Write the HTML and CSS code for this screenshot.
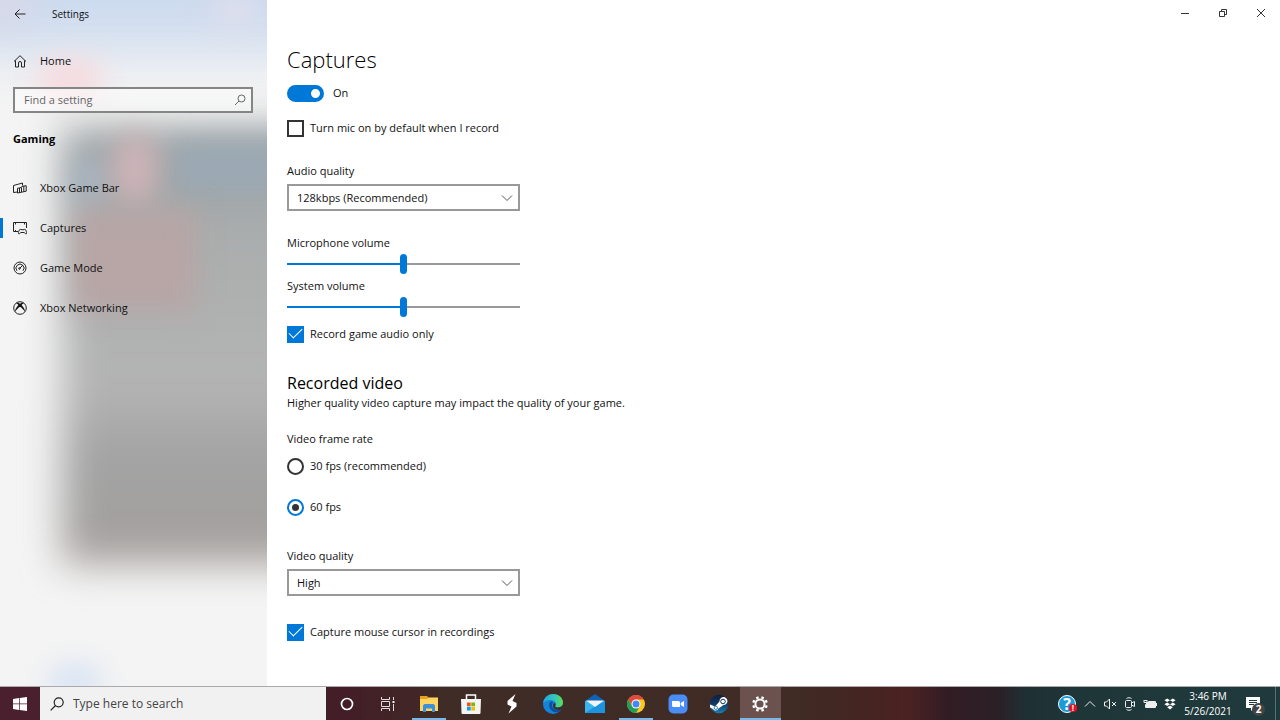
FILE: index.html
```html
<!DOCTYPE html>
<html lang="en">
<head>
    <meta charset="UTF-8">
    <meta name="viewport" content="width=device-width, initial-scale=1.0">
    <title>Settings</title>
    <link rel="stylesheet" href="styles.css">
</head>
<body>
    <div class="window">
        <aside class="sidebar">
            <!-- Acrylic backdrop -->
            <svg class="backdrop" viewBox="0 0 267 686" preserveAspectRatio="none" aria-hidden="true">
                <defs>
                    <filter id="blur" x="-150%" y="-150%" width="400%" height="400%" color-interpolation-filters="sRGB"><feGaussianBlur stdDeviation="14"/></filter>
                    <filter id="blurPanel" x="-50%" y="-50%" width="200%" height="200%" color-interpolation-filters="sRGB"><feGaussianBlur stdDeviation="19"/></filter>
                    <filter id="blurWide" x="-50%" y="-100%" width="200%" height="300%" color-interpolation-filters="sRGB"><feGaussianBlur stdDeviation="28"/></filter>
                    <linearGradient id="panel" x1="0" y1="0" x2="0" y2="1">
                        <stop offset="0" stop-color="#989fa1"/>
                        <stop offset="0.25" stop-color="#abaeae"/>
                        <stop offset="0.6" stop-color="#b4b4b4"/>
                        <stop offset="0.75" stop-color="#a3a3a3"/>
                        <stop offset="0.88" stop-color="#a3a2a1"/>
                        <stop offset="1" stop-color="#a59e9b"/>
                    </linearGradient>
                </defs>
                <rect width="267" height="686" fill="#f4f4f4"/>
                <rect x="-60" y="-70" width="400" height="120" fill="#ccdaee" filter="url(#blurWide)"/>
                <ellipse cx="5" cy="5" rx="30" ry="20" fill="#d8d8e8" filter="url(#blur)"/>
                <ellipse cx="235" cy="10" rx="22" ry="16" fill="#e2dfec" filter="url(#blur)"/>
                <ellipse cx="70" cy="80" rx="34" ry="20" fill="#f6d8dc" filter="url(#blur)"/>
                <rect x="62" y="128" width="400" height="436" fill="url(#panel)" filter="url(#blurPanel)"/>
                <rect x="172" y="142" width="200" height="50" fill="#9ba9b4" filter="url(#blur)"/>
                <ellipse cx="90" cy="182" rx="18" ry="26" fill="#a8b6c3" filter="url(#blur)"/>
                <ellipse cx="135" cy="170" rx="24" ry="38" fill="#ceb4b8" filter="url(#blur)"/>
                <rect x="74" y="210" width="122" height="100" fill="#b8a5a5" filter="url(#blur)"/>
                <ellipse cx="75" cy="682" rx="28" ry="18" fill="#d6e2f4" filter="url(#blur)"/>
            </svg>

            <header class="titlebar">
                <button class="back" aria-label="Back">
                    <svg width="12" height="12" viewBox="0 0 12 12"><path d="M11.500 6H1M5.500 1.500 1 6l4.500 4.500"/></svg>
                </button>
                <span class="app-name">Settings</span>
            </header>

            <a class="nav-item home" href="#">
                <svg width="14" height="14" viewBox="0 0 14 14"><path d="M1 7.500 7 1.700l6 5.800M2.500 6.500v6.500h3V9a1.500 1.500 0 0 1 3 0v4h3V6.500"/></svg>
                Home
            </a>

            <div class="find">
                <input type="text" placeholder="Find a setting" aria-label="Find a setting">
                <svg width="12" height="12" viewBox="0 0 12 12"><circle cx="7.500" cy="4.500" r="3.500"/><path d="M5 7 1 11"/></svg>
            </div>

            <h2 class="group">Gaming</h2>

            <nav>
                <a class="nav-item" href="#">
                    <svg width="14" height="14" viewBox="0 0 14 14"><path d="M4.500 11 .500 11.500V4.500L9.500 2v2.500M4.500 7.300V12l4-.800V6.500zM8.500 5.500l4.700-.8v5.500l-4.700 1M6.500 7v4.500M10.800 5v5.500"/></svg>
                    Xbox Game Bar
                </a>
                <a class="nav-item active" href="#">
                    <svg width="14" height="14" viewBox="0 0 14 14"><path d="M5 10.500H.500v-9h13V7M2.500 2v1.500M2.500 9v1.500M11.500 2v1.500M6 13c-1 0-.700-2 .300-4 .400-.800 1.200-.800 1.700-.300h3c.500-.500 1.300-.500 1.700.300 1 2 1.300 4 .300 4-.800 0-1-1.500-2-1.500H8C7 11.500 6.800 13 6 13z"/></svg>
                    Captures
                </a>
                <a class="nav-item" href="#">
                    <svg width="14" height="14" viewBox="0 0 14 14"><circle cx="7" cy="7" r="6"/><path d="M4 9.800a4 4 0 1 1 6 0M6.500 7.500 10 4"/><circle cx="6.500" cy="7.500" r=".800"/></svg>
                    Game Mode
                </a>
                <a class="nav-item" href="#">
                    <svg width="14" height="14" viewBox="0 0 14 14"><circle cx="7" cy="7" r="6.300"/><path class="solid" d="M3 1.800C5 1.300 6 2 7 2.700 8 2 9 1.300 11 1.800 10.500 2.600 9.500 3 8.600 4c2 2 3.600 5 3.500 7C11 9 9 7 7 5.700 5 7 3 9 1.900 11c-.1-2 1.500-5 3.500-7C4.500 3 3.500 2.600 3 1.800z"/></svg>
                    Xbox Networking
                </a>
            </nav>
        </aside>

        <main class="content">
            <div class="window-controls">
                <button aria-label="Minimize"><svg width="10" height="10" viewBox="0 0 10 10"><path d="M1 5.500h8"/></svg></button>
                <button aria-label="Restore"><svg width="10" height="10" viewBox="0 0 10 10"><path d="M1.500 3.500h5v5h-5zM3.500 3V1.500h5v5H7"/></svg></button>
                <button aria-label="Close"><svg width="10" height="10" viewBox="0 0 10 10"><path d="M1 1l8 8M9 1 1 9"/></svg></button>
            </div>

            <form class="settings">
                <h1>Captures</h1>

                <label class="option toggle"><input type="checkbox" role="switch" checked>On</label>
                <label class="option mic"><input type="checkbox">Turn mic on by default when I record</label>

                <div class="field">
                    <label for="audio-quality">Audio quality</label>
                    <div class="select">
                        <select id="audio-quality"><option>128kbps (Recommended)</option></select>
                        <svg width="12" height="8" viewBox="0 0 12 8"><path d="M1 1.500l5 5 5-5"/></svg>
                    </div>
                </div>

                <div class="volumes">
                    <label for="mic-volume">Microphone volume</label>
                    <input type="range" id="mic-volume" value="50">
                    <label for="system-volume">System volume</label>
                    <input type="range" id="system-volume" value="50">
                </div>

                <label class="option"><input type="checkbox" checked>Record game audio only</label>

                <h2>Recorded video</h2>
                <p>Higher quality video capture may impact the quality of your game.</p>

                <fieldset>
                    <legend>Video frame rate</legend>
                    <label class="option"><input type="radio" name="fps">30 fps (recommended)</label>
                    <label class="option"><input type="radio" name="fps" checked>60 fps</label>
                </fieldset>

                <div class="field">
                    <label for="video-quality">Video quality</label>
                    <div class="select">
                        <select id="video-quality"><option>High</option></select>
                        <svg width="12" height="8" viewBox="0 0 12 8"><path d="M1 1.500l5 5 5-5"/></svg>
                    </div>
                </div>

                <label class="option cursor"><input type="checkbox" checked>Capture mouse cursor in recordings</label>
            </form>
        </main>
    </div>

    <footer class="taskbar">
        <button class="start" aria-label="Start">
            <svg width="14" height="14" viewBox="0 0 14 14"><path fill="#fff" d="M0 2l6-.900v5.500H0zM6.700 1 14 0v6.600H6.700zM0 7.300h6v5.600L0 12zM6.700 7.300H14V14l-7.300-1z"/></svg>
        </button>
        <div class="search">
            <svg width="14" height="14" viewBox="0 0 14 14"><circle cx="8.700" cy="5.300" r="4.500"/><path d="M5.500 8.500.700 13.300"/></svg>
            <input type="text" placeholder="Type here to search" aria-label="Type here to search">
        </div>

        <div class="apps">
            <button aria-label="Cortana"><svg width="14" height="14" viewBox="0 0 14 14"><circle cx="7" cy="7" r="5.500" fill="none" stroke="#fff" stroke-width="1.700"/></svg></button>
            <button aria-label="Task View"><svg width="14" height="14" viewBox="0 0 14 14"><path fill="none" stroke="#ddd" d="M.500 0v2.500h8V0M.500 4.500h8v5h-8zM.500 14v-2.500h8V14M12.500 0v3M12.500 7v7"/><path fill="#fff" d="M11.500 4h2v2h-2z"/></svg></button>
            <button class="running" aria-label="File Explorer">
                <svg width="20" height="20" viewBox="0 0 20 20"><path fill="#e9a21b" d="M1 2h7l1.500 1.500H19V8H1z"/><path fill="#fcd462" d="M1 5h7l1.500-1.200H19V17H1z"/><path fill="#3d8fdc" d="M4 18v-6.500l1.500-1.500h9l1.500 1.500V18h-3v-3.500H7V18z"/></svg>
            </button>
            <button aria-label="Microsoft Store">
                <svg width="20" height="20" viewBox="0 0 20 20"><path fill="none" stroke="#fff" stroke-width="1.500" d="M5.500 6V1h9v5"/><path fill="#f4f4f4" d="M0 5h20l-.500 14a1 1 0 0 1-1 1h-17a1 1 0 0 1-1-1z"/><path fill="#f25022" d="M6 8.500h3.700v3.700H6z"/><path fill="#7fba00" d="M10.300 8.500H14v3.700h-3.700z"/><path fill="#00a4ef" d="M6 12.800h3.700v3.700H6z"/><path fill="#ffb900" d="M10.300 12.800H14v3.700h-3.700z"/></svg>
            </button>
            <button aria-label="Stylus"><svg width="20" height="20" viewBox="0 0 20 20"><path fill="#fff" d="M13.500 0 5.500 7v3.500l4 2-3 7 8-7V9l-4-2z"/></svg></button>
            <button aria-label="Microsoft Edge">
                <svg width="20" height="20" viewBox="0 0 20 20">
                    <defs><linearGradient id="edge" x1="0" x2="1"><stop offset="0" stop-color="#1fa5e6"/><stop offset="0.600" stop-color="#35c9b5"/><stop offset="1" stop-color="#60dc4e"/></linearGradient></defs>
                    <circle cx="10" cy="10" r="10" fill="#1683d8"/>
                    <path fill="url(#edge)" d="M0 9C1 3.500 5 0 10 0c6 0 10 4 10 8.500 0 3-2.500 5-5.500 5-2 0-3-1-2-2.200C14 8.500 11 6 7.500 6 4 6 1.500 7.500 0 9z"/>
                    <path fill="#0c4f9e" d="M7.500 7.500C5 10 6 16 11 18c3 1 6-.5 7.500-2.800C15 17 9 16 9 11c0-1.500.7-2.500 1.700-3z"/>
                    <path fill="#3e2b26" d="M11.500 9c1.200.7 1.400 1.500.8 2.600-.7 1.200.4 2 2.200 2 2.500 0 4.500-1 5.500-3 0 2-.6 3.600-1.500 4.800C14 17 10 15 10 11.500 10 10.500 10.500 9.500 11.500 9z"/>
                </svg>
            </button>
            <button aria-label="Mail">
                <svg width="20" height="20" viewBox="0 0 20 20"><path fill="#0b64b4" d="M0 7 10 0l10 7z"/><path fill="#39b5ee" d="M0 7h20v12H0z"/><path fill="#1b93de" d="M0 19l10-6.500L20 7v12z"/><path fill="#f3f3f3" d="M1 6.500h18l-9 6.500z"/></svg>
            </button>
            <button class="running" aria-label="Google Chrome">
                <svg width="20" height="20" viewBox="0 0 20 20"><circle cx="10" cy="10" r="9" fill="#fbc61e"/><path fill="#de4a3e" d="M10 5.500h7.800A9 9 0 0 0 2.200 5.500L6 12z"/><path fill="#249d58" d="M2.200 5.500A9 9 0 0 0 10 19l4-7-4 2-4-2z"/><circle cx="10" cy="10" r="4.500" fill="#fff"/><circle cx="10" cy="10" r="3.500" fill="#4688f1"/></svg>
            </button>
            <button aria-label="Zoom">
                <svg width="20" height="20" viewBox="0 0 20 20"><rect x=".500" y=".500" width="19" height="19" rx="5" fill="#4a8cf8"/><path fill="#fff" d="M4 7h6.500a1.500 1.500 0 0 1 1.500 1.500V13H5.500A1.500 1.500 0 0 1 4 11.500zM12.700 9 16 7v6l-3.300-2z"/></svg>
            </button>
            <button aria-label="Steam">
                <svg width="20" height="20" viewBox="0 0 20 20">
                    <defs><linearGradient id="steam" x1="0" y1="0" x2="0" y2="1"><stop offset="0" stop-color="#101c38"/><stop offset="0.500" stop-color="#123a67"/><stop offset="1" stop-color="#1582b8"/></linearGradient></defs>
                    <circle cx="10" cy="10" r="9.300" fill="url(#steam)"/><path fill="#fff" d="M1 10.500l5 2 4.500-5a4 4 0 1 1 4 3.600l-5 3.500a3 3 0 0 1-5.500.400L1 13.500z"/><circle cx="14" cy="7.500" r="2.300" fill="none" stroke="#18345c" stroke-width="1"/><circle cx="6.800" cy="13.800" r="1.700" fill="none" stroke="#1b5b8a" stroke-width=".800"/>
                </svg>
            </button>
            <button class="running current" aria-label="Settings">
                <svg width="16" height="16" viewBox="0 0 16 16"><circle cx="8" cy="8" r="4.600" fill="none" stroke="#fff" stroke-width="2"/><path stroke="#fff" stroke-width="2.600" d="M5.800 2.900 5 .700M10.200 2.900l.8-2.200M5.800 13.100l-.8 2.200M10.200 13.100l.8 2.200M2.900 5.800.700 5M2.900 10.200l-2.200.8M13.100 5.800l2.200-.8M13.100 10.200l2.200.8"/></svg>
            </button>
        </div>

        <div class="tray">
            <button class="help" aria-label="Help"><span>?</span><b>!</b></button>
            <button aria-label="Show hidden icons"><svg width="12" height="12" viewBox="0 0 12 12"><path d="M1 8.500l5-5 5 5"/></svg></button>
            <button aria-label="Muted"><svg width="14" height="12" viewBox="0 0 14 12"><path d="M1.500 4v4h2L6.500 11V1L3.500 4zM9 4l4 4M13 4 9 8"/></svg></button>
            <button aria-label="Meet Now"><svg width="12" height="14" viewBox="0 0 12 14"><rect x="1.500" y="3.500" width="6" height="7" rx="1"/><path d="M7.500 6l3-1.500v5l-3-1.500M2.500 1.500C4 .500 6 .500 7.500 1.500M2.500 12.500c1.500 1 3.500 1 5 0"/></svg></button>
            <button aria-label="Battery"><svg width="14" height="10" viewBox="0 0 14 10"><path fill="#eee" d="M5 3h7v5H3V5z"/><path d="M5.500 2.500h7v6h-10V5.500M13.500 4v3M.500 1.500h4M1 2v1.500h3V2"/></svg></button>
            <button aria-label="Dropbox"><svg width="12" height="12" viewBox="0 0 12 12"><path class="solid" d="M3.200.500 6 2.300 3.200 4.100.400 2.300zM8.800.500l2.800 1.800-2.800 1.800L6 2.300zM3.200 4.400 6 6.200 3.200 8 .400 6.200zM8.800 4.400l2.800 1.800L8.800 8 6 6.200zM6 7.500l2.800 1.800L6 11.500 3.200 9.300z"/></svg></button>
            <button class="clock"><time>3:46 PM</time><time>5/26/2021</time></button>
            <button class="notifications" aria-label="Notifications">
                <svg width="14" height="14" viewBox="0 0 14 14"><path class="solid" d="M0 0h14v11H8l-3 3v-3H0z"/><path class="lines" d="M3 3.500h8M3 5.500h8M3 7.500h5"/></svg>
                <b>2</b>
            </button>
            <button class="show-desktop" aria-label="Show desktop"></button>
        </div>
    </footer>
</body>
</html>
```

FILE: styles.css
```css
* {
    margin: 0;
    padding: 0;
    box-sizing: border-box;
}

body {
    display: flex;
    flex-direction: column;
    height: 100vh;
    overflow: hidden;
    background: #fff;
    color: #111;
    font-family: "Open Sans", "Noto Sans", sans-serif;
    font-size: 11px;
    line-height: 18px;
}

button, input, select {
    font: inherit;
    color: inherit;
    background: none;
    border: 0;
}

button {
    display: flex;
    align-items: center;
    justify-content: center;
}

svg {
    flex-shrink: 0;
}

.window {
    flex: 1;
    display: flex;
    min-height: 0;
}

/* Sidebar */
.sidebar {
    position: relative;
    width: 267px;
    overflow: hidden;
    isolation: isolate;
}

.sidebar svg {
    fill: none;
    stroke: #222;
}

.sidebar .backdrop {
    position: absolute;
    inset: 0;
    width: 100%;
    height: 100%;
    z-index: -1;
    stroke: none;
}

.sidebar .solid {
    fill: #111;
    stroke: none;
}

.titlebar {
    display: flex;
    align-items: center;
    height: 27px;
}

.back {
    width: 40px;
    height: 27px;
}

.app-name {
    padding-left: 12px;
    font-size: 10px;
}

.nav-item {
    display: flex;
    align-items: center;
    gap: 13px;
    height: 40px;
    padding-left: 13px;
    color: inherit;
    text-decoration: none;
}

.home {
    margin-top: 14px;
}

.active {
    background: linear-gradient(#0078d7, #0078d7) left center / 3px 20px no-repeat;
}

.find {
    display: flex;
    align-items: center;
    height: 26px;
    margin: 6px 14px 0 13px;
    padding: 0 5px 0 9px;
    border: 2px solid #858585;
    background: rgba(255, 255, 255, 0.5);
}

.find input {
    flex: 1;
    min-width: 0;
    outline: 0;
}

.find input::placeholder {
    color: #666;
}

.find svg {
    stroke: #666;
}

.group {
    margin: 17px 13px 20px;
    font-size: 11px;
    font-weight: 700;
    color: #000;
}

/* Content */
.content {
    flex: 1;
    display: flex;
    flex-direction: column;
}

.window-controls {
    display: flex;
    justify-content: flex-end;
    height: 26px;
}

.window-controls button {
    width: 38px;
}

.window-controls svg {
    fill: none;
    stroke: #333;
}

.settings {
    padding: 15px 20px 0;
}

h1 {
    font-size: 22px;
    font-weight: 300;
    line-height: 36px;
    color: #000;
}

.settings h2 {
    margin-top: 29px;
    font-size: 16px;
    font-weight: 400;
    line-height: 22px;
    color: #000;
}

.option {
    display: flex;
    align-items: center;
    gap: 6px;
    width: max-content;
}

.option input {
    appearance: none;
    display: flex;
    align-items: center;
    justify-content: center;
    width: 17px;
    height: 17px;
    border: 2px solid #333;
}

.option input[type="checkbox"]:checked {
    border-color: #0078d7;
    background: #0078d7;
}

.option input[type="checkbox"]:checked::after {
    content: "";
    width: 6px;
    height: 12px;
    margin-bottom: 5px;
    flex-shrink: 0;
    border: solid #fff;
    border-width: 0 1px 1px 0;
    transform: rotate(45deg);
}

.option input[type="radio"] {
    border-radius: 50%;
}

.option input[type="radio"]:checked {
    border-color: #0078d7;
}

.option input[type="radio"]:checked::after {
    content: "";
    width: 7px;
    height: 7px;
    border-radius: 50%;
    background: #333;
}

.option.toggle {
    gap: 9px;
    margin-top: 7px;
}

.toggle input[type="checkbox"] {
    justify-content: flex-end;
    width: 37px;
    border-radius: 9px;
}

.toggle input[type="checkbox"]:checked::after {
    width: 9px;
    height: 9px;
    margin: 0 2px;
    border: 0;
    border-radius: 50%;
    background: #fff;
}

.mic {
    margin-top: 17px;
}

.field {
    margin-top: 25px;
}

.select {
    position: relative;
    width: 233px;
    margin-top: 4px;
}

.select select {
    appearance: none;
    width: 100%;
    height: 27px;
    padding: 0 28px 0 8px;
    border: 2px solid #999;
}

.select svg {
    position: absolute;
    top: 10px;
    right: 7px;
    fill: none;
    stroke: #555;
    pointer-events: none;
}

.volumes {
    display: flex;
    flex-direction: column;
    width: 233px;
    margin: 23px 0 5px;
}

.volumes input {
    appearance: none;
    height: 20px;
    margin: 2px 0 3px;
    background: linear-gradient(90deg, #0078d7 50%, #999 50%) center / 100% 2px no-repeat;
}

.volumes input::-webkit-slider-thumb {
    appearance: none;
    width: 7px;
    height: 20px;
    border-radius: 4px;
    background: #0078d7;
}

fieldset {
    display: flex;
    flex-direction: column;
    gap: 23px;
    margin-top: 18px;
    border: 0;
}

legend {
    margin-bottom: 9px;
}

fieldset + .field {
    margin-top: 31px;
}

.cursor {
    margin-top: 27px;
}

/* Taskbar */
.taskbar {
    display: flex;
    height: 34px;
    border-top: 1px solid #aaa;
    background: linear-gradient(90deg, #4a1f2e 0, #431d27 27%, #3f2c26 35%, #402b25 62%, #452420 68%, #4a2223 71%, #321c24 74%, #2b1f26 78%, #1f2f34 80%, #1f3638 84%, #1f3a3d 100%);
    color: #fff;
}

.start {
    width: 40px;
}

.search {
    display: flex;
    align-items: center;
    gap: 9px;
    width: 286px;
    padding-left: 10px;
    background: #f1f1f1;
    color: #333;
}

.search svg {
    fill: none;
    stroke: #222;
    stroke-width: 1.2;
}

.search input {
    flex: 1;
    min-width: 0;
    font-size: 12px;
    outline: 0;
}

.search input::placeholder {
    color: #444;
}

.apps {
    display: flex;
    width: 455px;
}

.apps button {
    flex: 1;
}

.running {
    background: linear-gradient(#76b9ed, #76b9ed) center bottom / 34px 2px no-repeat;
}

.current {
    background-color: #6b524e;
    background-size: 100% 2px;
}

.tray {
    display: flex;
    margin-left: auto;
}

.tray button {
    width: 20px;
}

.tray svg {
    fill: none;
    stroke: #eee;
}

.tray .solid {
    fill: #fff;
    stroke: none;
}

.tray .help {
    position: relative;
    width: 26px;
}

.help span {
    width: 18px;
    height: 18px;
    border: 1px solid #fff;
    border-radius: 50%;
    background: #1c9ad6;
    font-size: 16px;
    font-weight: 700;
    line-height: 16px;
}

.help b {
    position: absolute;
    right: 3px;
    bottom: 8px;
    width: 8px;
    height: 8px;
    border-radius: 50%;
    background: #e81123;
    font-size: 8px;
    line-height: 8px;
}

.tray .clock {
    flex-direction: column;
    width: 56px;
    font-size: 10px;
    line-height: 15px;
}

.tray .notifications {
    position: relative;
    width: 39px;
    padding-right: 6px;
}

.notifications .lines {
    stroke: #1f3a3d;
}

.notifications b {
    position: absolute;
    right: 10px;
    bottom: 4px;
    width: 13px;
    height: 13px;
    border-radius: 50%;
    background: #444;
    font-size: 10px;
    line-height: 13px;
}

.tray .show-desktop {
    width: 5px;
    border-left: 1px solid #5c7072;
}
```
